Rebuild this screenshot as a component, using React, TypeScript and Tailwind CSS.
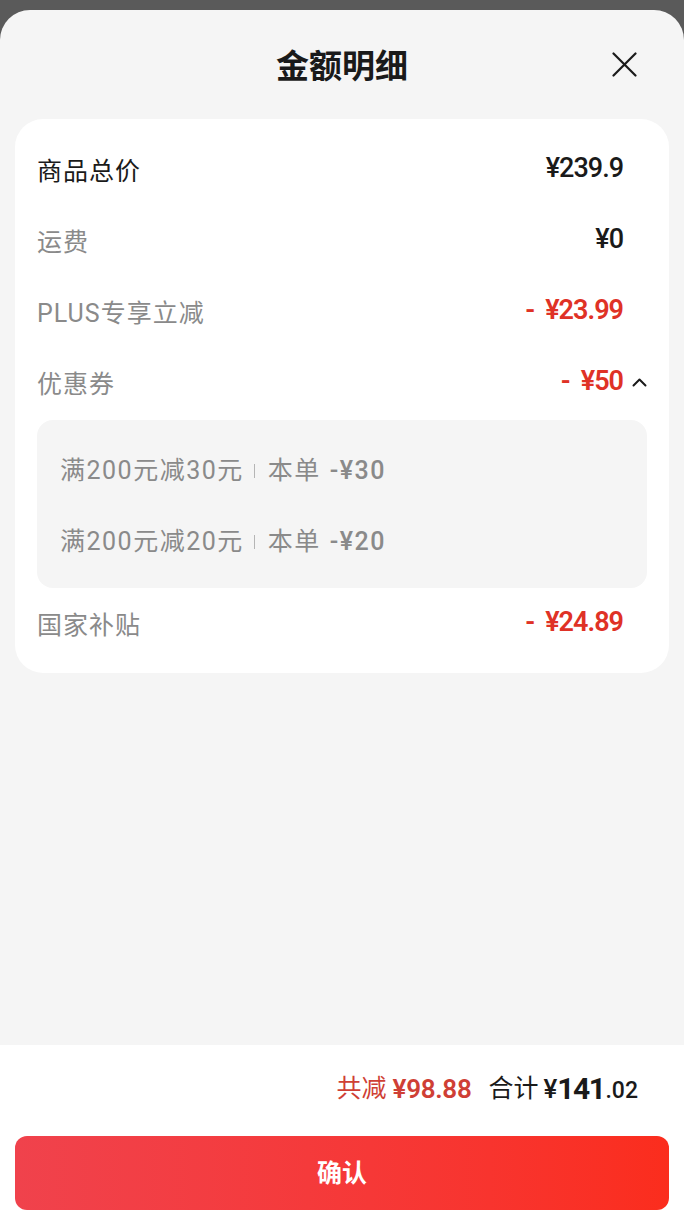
import React from "react";

const CJK = "font-['Roboto','Noto_Sans_CJK_SC',sans-serif]";

function Amount({ value, red }: { value: string; red?: boolean }) {
  if (red) {
    return (
      <span className="flex items-center text-[27px] font-semibold leading-none tracking-[-1px] text-[#df3226]">
        <span>-</span>
        <span className="ml-[11px]">{value}</span>
      </span>
    );
  }
  return <span className="text-[27px] font-medium leading-none tracking-[-1px] text-[#1a1a1a]">{value}</span>;
}

function Row({
  label,
  amount,
  red,
  dark,
  chevron,
  className = "",
}: {
  label: string;
  amount: string;
  red?: boolean;
  dark?: boolean;
  chevron?: boolean;
  className?: string;
}) {
  return (
    <div className={`flex h-[71px] items-center justify-between ${className}`}>
      <span className={`text-[25px] leading-none tracking-[1px] ${dark ? "text-[#1a1a1a]" : "text-[#8a8a8a]"}`}>{label}</span>
      <div className="-mt-[6px] flex items-center">
        <Amount value={amount} red={red} />
        <span className="flex w-[24px] justify-end">
          {chevron && (
            <svg width="15" height="10" viewBox="0 0 15 10" fill="none">
              <path d="M1.5 8.5 L7.5 2.5 L13.5 8.5" stroke="#1a1a1a" strokeWidth="2" strokeLinecap="round" strokeLinejoin="round" />
            </svg>
          )}
        </span>
      </div>
    </div>
  );
}

function Coupon({ text, amount }: { text: string; amount: string }) {
  return (
    <div className="flex h-[71px] items-center text-[25px] leading-none tracking-[1.5px] text-[#8a8a8a]">
      <span>{text}</span>
      <span className="ml-[10px] mr-[13px] h-[14px] w-[1px] bg-[#b5b5b5]" />
      <span>本单</span>
      <span className="ml-[9px] font-medium">{amount}</span>
    </div>
  );
}

export default function App() {
  return (
    <div className={`flex h-[1225px] w-full flex-col bg-[#5a5a5a] pt-[10px] ${CJK}`}>
      <div className="flex flex-1 flex-col overflow-hidden rounded-t-[30px] bg-[#f5f5f5]">
        <div className="relative flex h-[109px] items-center justify-center pt-[4px]">
          <span className="text-[33px] font-bold leading-none text-[#1a1a1a]">金额明细</span>
          <svg
            className="absolute right-[47px] top-[42px]"
            width="25"
            height="25"
            viewBox="0 0 25 25"
            fill="none"
          >
            <path d="M1.5 1.5 L23.5 23.5 M23.5 1.5 L1.5 23.5" stroke="#1a1a1a" strokeWidth="2.2" strokeLinecap="round" />
          </svg>
        </div>

        <div className="mx-[15px] rounded-[28px] bg-white px-[22px] pb-[12px] pt-[17px]">
          <Row label="商品总价" amount="¥239.9" dark />
          <Row label="运费" amount="¥0" />
          <Row label="PLUS专享立减" amount="¥23.99" red />
          <Row label="优惠券" amount="¥50" red chevron />
          <div className="rounded-[16px] bg-[#f5f5f5] px-[23px] pb-[11px] pt-[15px]">
            <Coupon text="满200元减30元" amount="-¥30" />
            <Coupon text="满200元减20元" amount="-¥20" />
          </div>
          <Row label="国家补贴" amount="¥24.89" red className="mt-[2px]" />
        </div>

        <div className="flex-1" />

        <div className="flex h-[180px] flex-col bg-white">
          <div className="flex h-[91px] items-center justify-end pb-[4px] pr-[46px]">
            <span className="text-[25px] leading-none text-[#cf3f35]">共减</span>
            <span className="ml-[6px] text-[26px] font-semibold leading-none tracking-[-0.3px] text-[#cf3f35]">¥98.88</span>
            <span className="ml-[17px] text-[25px] leading-none text-[#1a1a1a]">合计</span>
            <span className="ml-[5px] text-[26px] font-medium leading-none text-[#1a1a1a]">¥</span>
            <span className="text-[30px] font-bold leading-none tracking-[-1.5px] text-[#1a1a1a]">141</span>
            <span className="ml-[1px] mt-[4px] text-[23px] font-medium leading-none text-[#1a1a1a]">.02</span>
          </div>
          <div className="mx-[15px] flex h-[74px] items-center justify-center rounded-[12px] bg-gradient-to-r from-[#f0424c] to-[#fb2d1d]">
            <span className="text-[25px] font-bold leading-none text-white">确认</span>
          </div>
        </div>
      </div>
    </div>
  );
}
